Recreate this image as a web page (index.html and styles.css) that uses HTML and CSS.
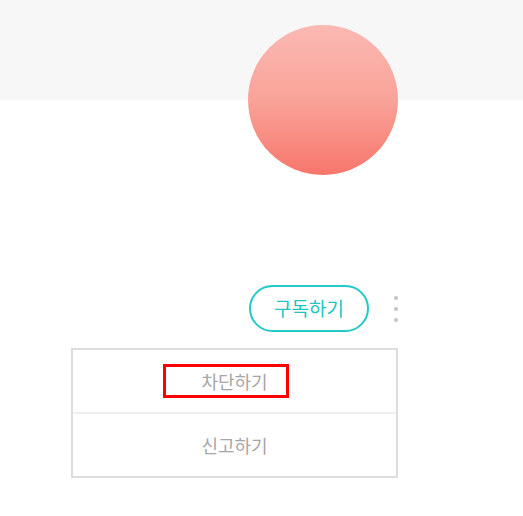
FILE: index.html
```html
<!DOCTYPE html>
<html lang="ko">
<head>
<meta charset="utf-8">
<link rel="stylesheet" href="styles.css">
</head>
<body>
<div class="cover"></div>
<div class="avatar"></div>
<div class="actions">
  <button class="subscribe">구독하기</button>
  <div class="more"><span></span><span></span><span></span></div>
</div>
<div class="menu">
  <div class="item item-block">차단하기<span class="highlight"></span></div>
  <div class="item">신고하기</div>
</div>
</body>
</html>
```
FILE: styles.css
```css
html, body {
  margin: 0;
  padding: 0;
  background: #ffffff;
  font-family: "Noto Sans CJK KR", "Noto Sans", sans-serif;
}
.cover {
  height: 100px;
  background: #f7f7f7;
}
.avatar {
  width: 150px;
  height: 150px;
  border-radius: 50%;
  margin: -75px 0 0 248px;
  background: linear-gradient(to bottom, #fab9b3 0%, #f9a399 50%, #f7766b 100%);
}
.actions {
  width: 398px;
  margin-top: 110px;
  display: flex;
  align-items: center;
  justify-content: flex-end;
}
.subscribe {
  box-sizing: border-box;
  width: 120px;
  height: 47px;
  border: 2px solid #22c9c6;
  border-radius: 24px;
  background: #fff;
  color: #22c4c2;
  font-family: "Noto Sans CJK KR", "Noto Sans", sans-serif;
  font-size: 19px;
  font-weight: 400;
  padding: 0 0 2px;
  margin-right: 25px;
}
.more {
  width: 4px;
  display: flex;
  flex-direction: column;
  gap: 7px;
}
.more span {
  width: 4px;
  height: 4px;
  border-radius: 50%;
  background: #c4c4c4;
}
.menu {
  box-sizing: border-box;
  width: 327px;
  margin: 16px 0 0 71px;
  border: 2px solid #dddddd;
}
.item {
  position: relative;
  height: 62px;
  display: flex;
  align-items: center;
  justify-content: center;
  color: #a6a6a6;
  font-size: 18px;
  font-weight: 400;
}
.item-block {
  border-bottom: 2px solid #eeeeee;
}
.highlight {
  position: absolute;
  left: 90px;
  top: 14px;
  width: 126px;
  height: 34px;
  box-sizing: border-box;
  border: 3px solid #ff0000;
}
```
